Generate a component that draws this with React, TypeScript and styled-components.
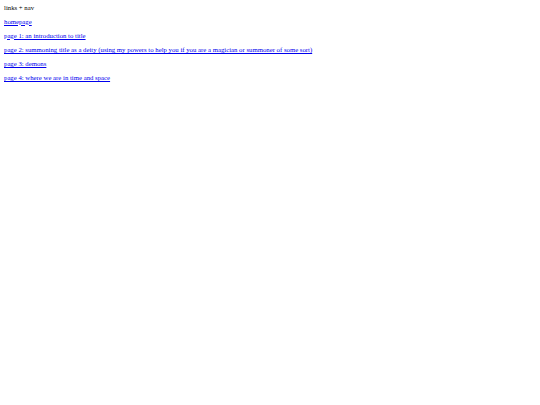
import React from "react";
import styled, { createGlobalStyle } from "styled-components";

const Global = createGlobalStyle`
  html, body { margin: 0; padding: 0; background: #ffffff; }
  body { font-family: "Liberation Serif", "Times New Roman", serif; }
`;

const Page = styled.div`
  display: flex;
  flex-direction: column;
  padding: 0.5px 4px 0;
  font-size: 6.75px;
  color: #000000;
`;

const Line = styled.div`
  line-height: 14.2px;
  height: 14.2px;
  white-space: nowrap;
`;

const NavLink = styled.a`
  color: #0000ee;
  text-decoration: underline;
`;

const links = [
  "homepage",
  "page 1: an introduction to title",
  "page 2: summoning title as a deity (using my powers to help you if you are a magician or summoner of some sort)",
  "page 3: demons",
  "page 4: where we are in time and space",
];

export default function App() {
  return (
    <>
      <Global />
      <Page>
        <Line>links + nav</Line>
        {links.map((l) => (
          <Line key={l}>
            <NavLink href="#">{l}</NavLink>
          </Line>
        ))}
      </Page>
    </>
  );
}
